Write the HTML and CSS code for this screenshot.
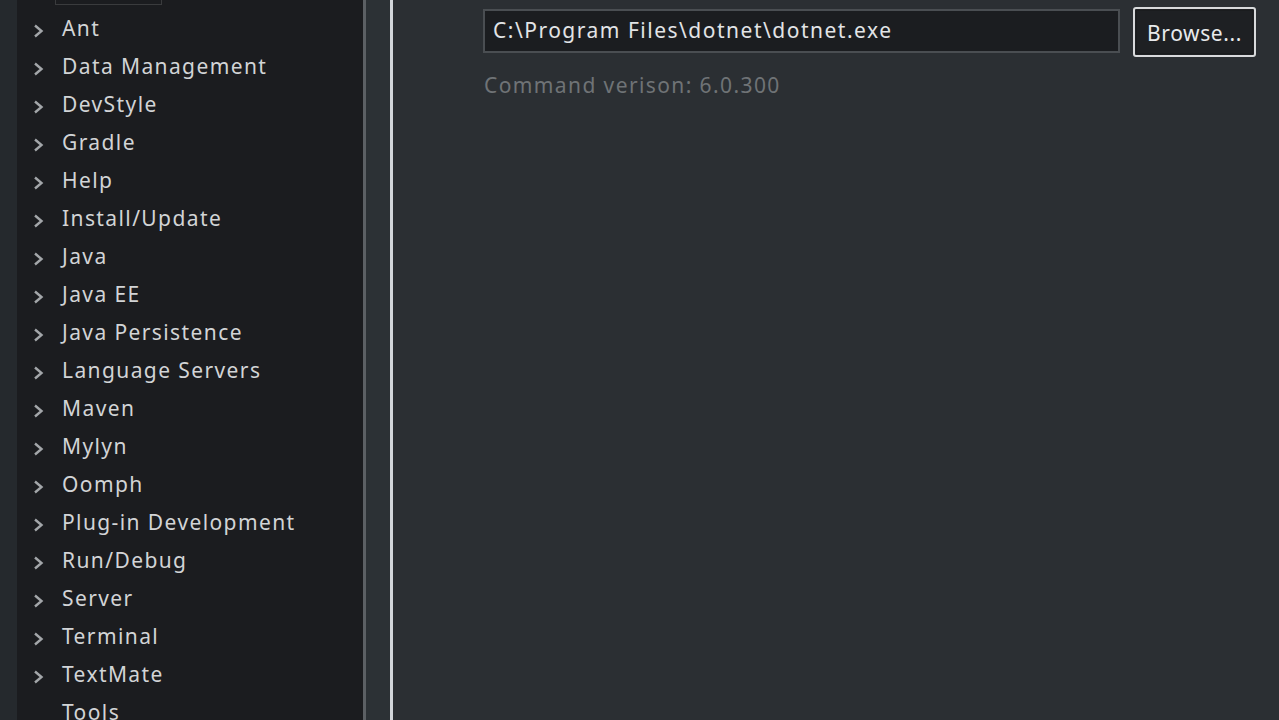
FILE: index.html
```html
<!DOCTYPE html>
<html>
<head>
<meta charset="utf-8">
<link rel="stylesheet" href="styles.css">
</head>
<body>
<div class="app">
  <div class="edge"></div>
  <nav class="sidebar">
    <ul class="tree">
      <li class="item selected"><span class="chev"></span><span class="label">General</span></li>
      <li class="item"><span class="chev"><svg viewBox="0 0 14 16" width="14" height="16"><path d="M4 2.5 L10.5 8 L4 13.5" fill="none" stroke="#a3a6a9" stroke-width="2.4"/></svg></span><span class="label">Ant</span></li>
      <li class="item"><span class="chev"><svg viewBox="0 0 14 16" width="14" height="16"><path d="M4 2.5 L10.5 8 L4 13.5" fill="none" stroke="#a3a6a9" stroke-width="2.4"/></svg></span><span class="label">Data Management</span></li>
      <li class="item"><span class="chev"><svg viewBox="0 0 14 16" width="14" height="16"><path d="M4 2.5 L10.5 8 L4 13.5" fill="none" stroke="#a3a6a9" stroke-width="2.4"/></svg></span><span class="label">DevStyle</span></li>
      <li class="item"><span class="chev"><svg viewBox="0 0 14 16" width="14" height="16"><path d="M4 2.5 L10.5 8 L4 13.5" fill="none" stroke="#a3a6a9" stroke-width="2.4"/></svg></span><span class="label">Gradle</span></li>
      <li class="item"><span class="chev"><svg viewBox="0 0 14 16" width="14" height="16"><path d="M4 2.5 L10.5 8 L4 13.5" fill="none" stroke="#a3a6a9" stroke-width="2.4"/></svg></span><span class="label">Help</span></li>
      <li class="item"><span class="chev"><svg viewBox="0 0 14 16" width="14" height="16"><path d="M4 2.5 L10.5 8 L4 13.5" fill="none" stroke="#a3a6a9" stroke-width="2.4"/></svg></span><span class="label">Install/Update</span></li>
      <li class="item"><span class="chev"><svg viewBox="0 0 14 16" width="14" height="16"><path d="M4 2.5 L10.5 8 L4 13.5" fill="none" stroke="#a3a6a9" stroke-width="2.4"/></svg></span><span class="label">Java</span></li>
      <li class="item"><span class="chev"><svg viewBox="0 0 14 16" width="14" height="16"><path d="M4 2.5 L10.5 8 L4 13.5" fill="none" stroke="#a3a6a9" stroke-width="2.4"/></svg></span><span class="label">Java EE</span></li>
      <li class="item"><span class="chev"><svg viewBox="0 0 14 16" width="14" height="16"><path d="M4 2.5 L10.5 8 L4 13.5" fill="none" stroke="#a3a6a9" stroke-width="2.4"/></svg></span><span class="label">Java Persistence</span></li>
      <li class="item"><span class="chev"><svg viewBox="0 0 14 16" width="14" height="16"><path d="M4 2.5 L10.5 8 L4 13.5" fill="none" stroke="#a3a6a9" stroke-width="2.4"/></svg></span><span class="label">Language Servers</span></li>
      <li class="item"><span class="chev"><svg viewBox="0 0 14 16" width="14" height="16"><path d="M4 2.5 L10.5 8 L4 13.5" fill="none" stroke="#a3a6a9" stroke-width="2.4"/></svg></span><span class="label">Maven</span></li>
      <li class="item"><span class="chev"><svg viewBox="0 0 14 16" width="14" height="16"><path d="M4 2.5 L10.5 8 L4 13.5" fill="none" stroke="#a3a6a9" stroke-width="2.4"/></svg></span><span class="label">Mylyn</span></li>
      <li class="item"><span class="chev"><svg viewBox="0 0 14 16" width="14" height="16"><path d="M4 2.5 L10.5 8 L4 13.5" fill="none" stroke="#a3a6a9" stroke-width="2.4"/></svg></span><span class="label">Oomph</span></li>
      <li class="item"><span class="chev"><svg viewBox="0 0 14 16" width="14" height="16"><path d="M4 2.5 L10.5 8 L4 13.5" fill="none" stroke="#a3a6a9" stroke-width="2.4"/></svg></span><span class="label">Plug-in Development</span></li>
      <li class="item"><span class="chev"><svg viewBox="0 0 14 16" width="14" height="16"><path d="M4 2.5 L10.5 8 L4 13.5" fill="none" stroke="#a3a6a9" stroke-width="2.4"/></svg></span><span class="label">Run/Debug</span></li>
      <li class="item"><span class="chev"><svg viewBox="0 0 14 16" width="14" height="16"><path d="M4 2.5 L10.5 8 L4 13.5" fill="none" stroke="#a3a6a9" stroke-width="2.4"/></svg></span><span class="label">Server</span></li>
      <li class="item"><span class="chev"><svg viewBox="0 0 14 16" width="14" height="16"><path d="M4 2.5 L10.5 8 L4 13.5" fill="none" stroke="#a3a6a9" stroke-width="2.4"/></svg></span><span class="label">Terminal</span></li>
      <li class="item"><span class="chev"><svg viewBox="0 0 14 16" width="14" height="16"><path d="M4 2.5 L10.5 8 L4 13.5" fill="none" stroke="#a3a6a9" stroke-width="2.4"/></svg></span><span class="label">TextMate</span></li>
      <li class="item"><span class="chev"></span><span class="label">Tools</span></li>
    </ul>
    <div class="scrollbar"></div>
  </nav>
  <div class="gutter"></div>
  <div class="divider"></div>
  <main class="content">
    <div class="path-row">
      <div class="field">C:\Program Files\dotnet\dotnet.exe</div>
      <button class="browse">Browse...</button>
    </div>
    <div class="version">Command verison: 6.0.300</div>
  </main>
</div>
</body>
</html>
```

FILE: styles.css
```css
html, body {
  margin: 0;
  padding: 0;
  width: 1279px;
  height: 720px;
  overflow: hidden;
  background: #2b2f33;
  font-family: "Noto Sans", "Open Sans", sans-serif;
}

.app {
  display: flex;
  height: 720px;
}

.edge {
  width: 17px;
  background: #25292d;
  flex: none;
}

.sidebar {
  width: 349px;
  flex: none;
  background: #1b1c1f;
  display: flex;
  overflow: hidden;
}

.tree {
  list-style: none;
  margin: -29px 0 0 0;
  padding: 0;
  flex: 1;
}

.item {
  height: 38px;
  display: flex;
  align-items: center;
  color: #d2d4d6;
  font-size: 21px;
  letter-spacing: 1.4px;
}

.chev {
  width: 14px;
  margin-left: 14px;
  margin-right: 17px;
  display: flex;
  align-items: center;
  padding-top: 6px;
}

.label {
  white-space: nowrap;
}

.selected .label {
  color: #6b6a60;
  border: 1px solid #3a3b3d;
  padding: 0 12px 0 6px;
  margin-left: -7px;
}

.scrollbar {
  width: 3px;
  background: #5c6064;
  flex: none;
}

.gutter {
  width: 24px;
  flex: none;
  background: #2c3135;
}

.divider {
  width: 3px;
  flex: none;
  background: #d2d6da;
}

.content {
  flex: 1;
  padding: 7px 25px 0 90px;
  background: #2b2f33;
}

.path-row {
  display: flex;
  align-items: flex-start;
  gap: 13px;
}

.field {
  margin-top: 2px;
  width: 637px;
  height: 44px;
  box-sizing: border-box;
  border: 2px solid #4a4e52;
  background: #1b1d20;
  color: #e2e4e6;
  font-size: 21px;
  letter-spacing: 1.5px;
  line-height: 38px;
  padding-left: 8px;
  white-space: nowrap;
}

.browse {
  width: 123px;
  height: 50px;
  box-sizing: border-box;
  border: 2px solid #d8dadc;
  border-radius: 3px;
  background: #1e2023;
  color: #e8eaec;
  font-family: "Noto Sans", "Open Sans", sans-serif;
  font-size: 21px;
  letter-spacing: 0.6px;
  padding: 2px 0 0 0;
  outline: 1px solid #1a1c1e;
  outline-offset: -4px;
}

.version {
  margin-top: 14px;
  margin-left: 1px;
  color: #6f7376;
  font-size: 21px;
  letter-spacing: 1.4px;
}
```
